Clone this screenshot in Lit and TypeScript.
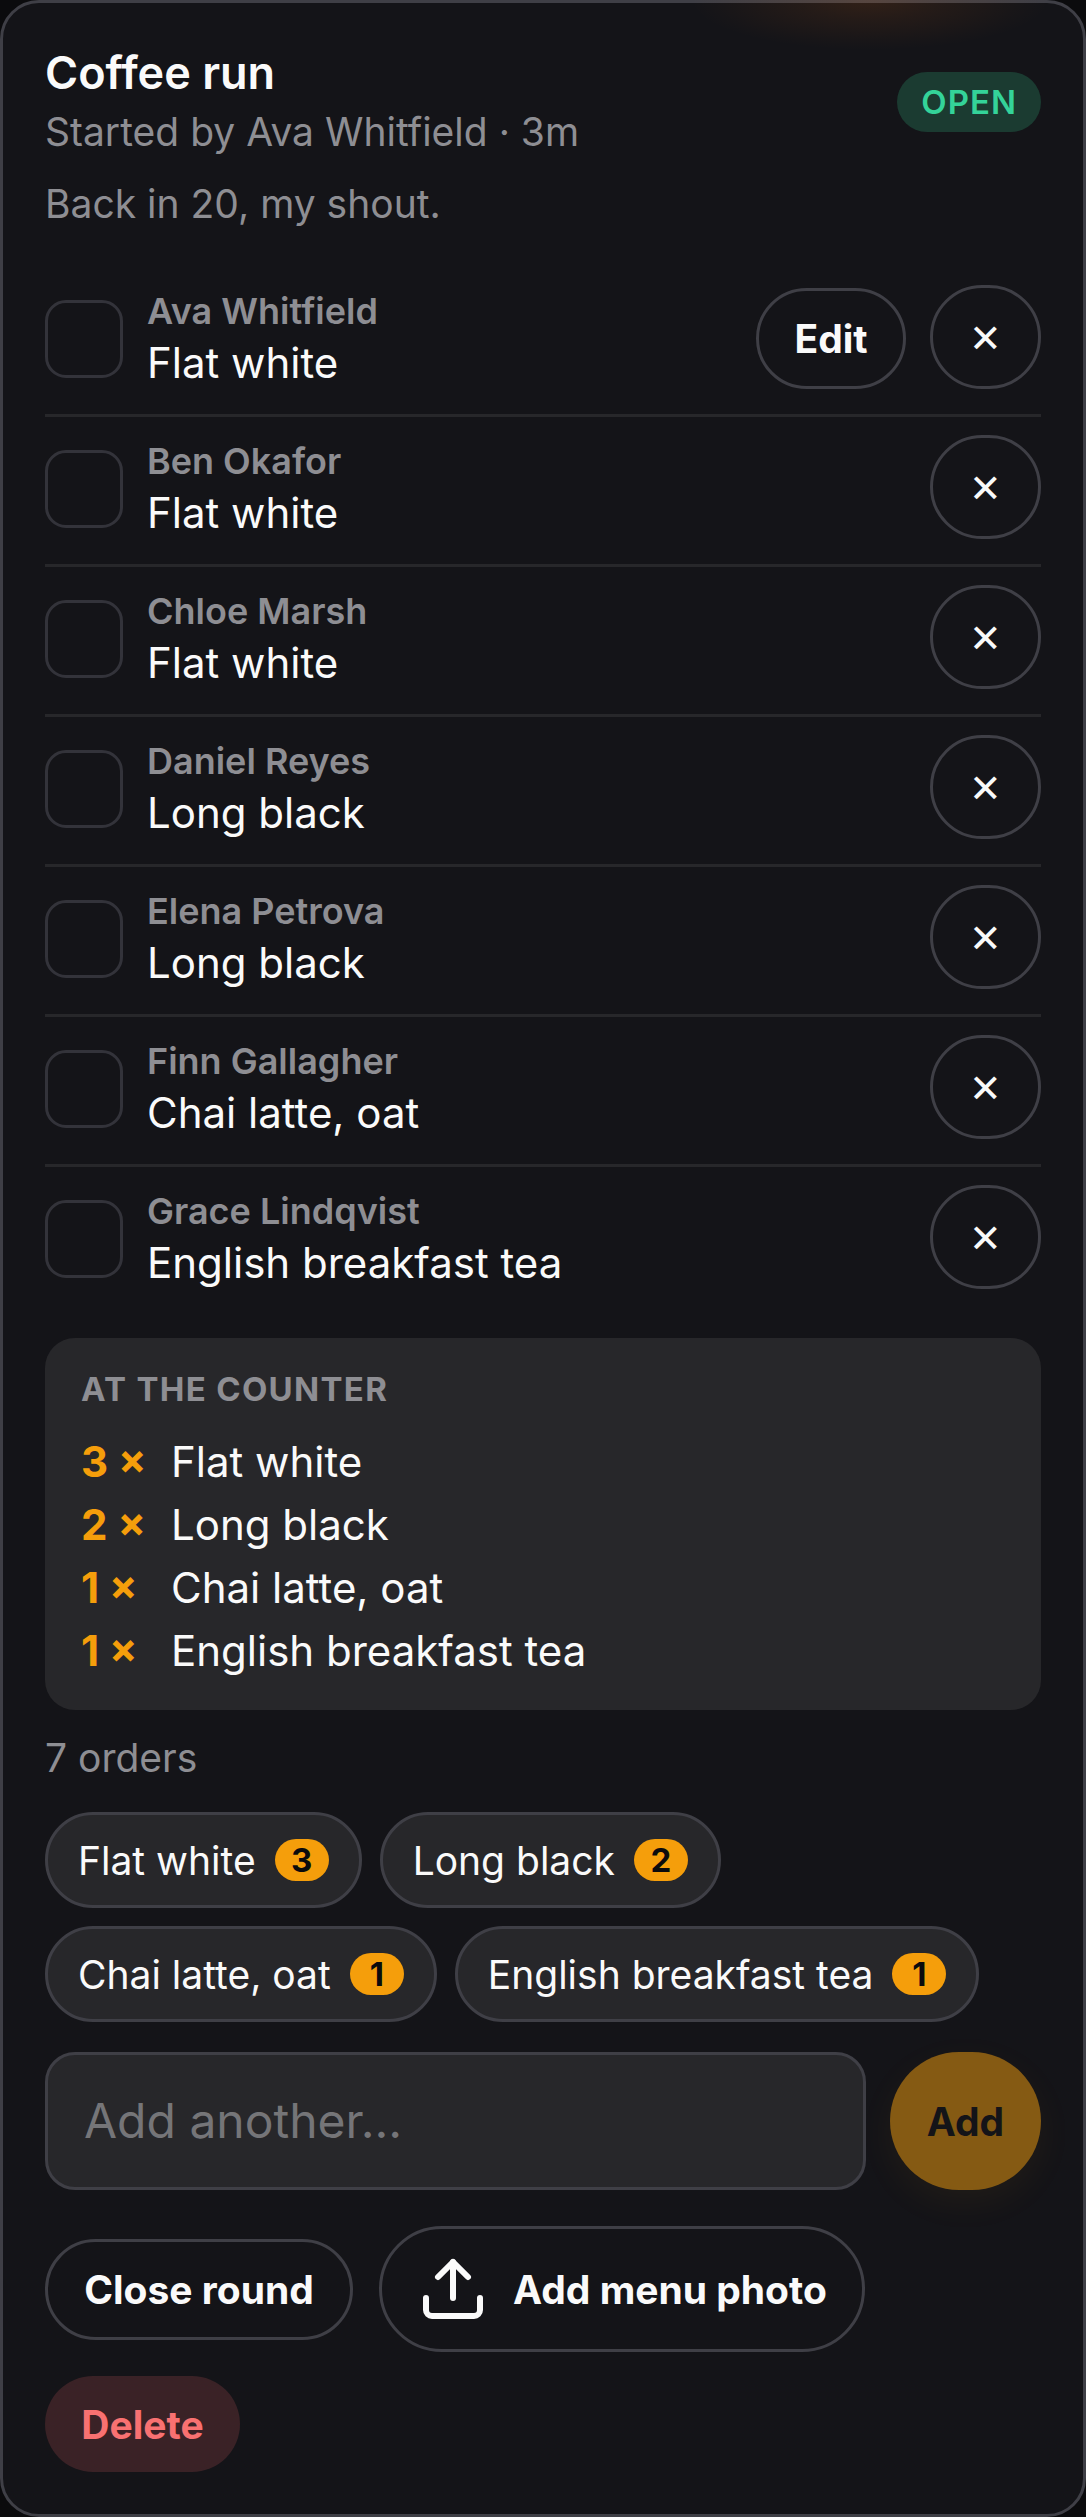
import { LitElement, html, css, svg } from 'lit';
import { customElement } from 'lit/decorators.js';

const orders = [
  { name: 'Ava Whitfield', item: 'Flat white', mine: true },
  { name: 'Ben Okafor', item: 'Flat white' },
  { name: 'Chloe Marsh', item: 'Flat white' },
  { name: 'Daniel Reyes', item: 'Long black' },
  { name: 'Elena Petrova', item: 'Long black' },
  { name: 'Finn Gallagher', item: 'Chai latte, oat' },
  { name: 'Grace Lindqvist', item: 'English breakfast tea' },
];

const tally = [
  { item: 'Flat white', count: 3 },
  { item: 'Long black', count: 2 },
  { item: 'Chai latte, oat', count: 1 },
  { item: 'English breakfast tea', count: 1 },
];

const uploadIcon = svg`<path d="M21 15v4a2 2 0 0 1-2 2H5a2 2 0 0 1-2-2v-4" /><polyline points="17 8 12 3 7 8" /><line x1="12" y1="3" x2="12" y2="15" />`;

@customElement('app-root')
export class AppRoot extends LitElement {
  static styles = css`
    :host {
      display: block;
      background: #0b0b0d;
      font-family: Inter, 'Liberation Sans', sans-serif;
      color: #fafafa;
    }

    .card {
      position: relative;
      box-sizing: border-box;
      padding: 42px;
      background: #141418;
      border: 3px solid #3f3f46;
      border-radius: 39px;
    }

    /* warm light leaking in along the top edge, also tints the border */
    .glow {
      position: absolute;
      top: -53px;
      left: 687px;
      width: 360px;
      height: 100px;
      background: radial-gradient(
        closest-side,
        rgba(249, 115, 22, 0.13),
        rgba(249, 115, 22, 0.07) 40%,
        rgba(249, 115, 22, 0.015) 85%,
        transparent
      );
      pointer-events: none;
    }

    header {
      display: flex;
      justify-content: space-between;
      align-items: flex-start;
    }

    h1 {
      margin: 0;
      font-size: 45px;
      line-height: 56px;
      font-weight: 600;
    }

    .by {
      font-size: 39px;
      line-height: 62px;
      color: #8e8e93;
    }

    .status {
      margin-top: 27px;
      padding: 0 24px;
      height: 60px;
      line-height: 60px;
      border-radius: 999px;
      background: #1b3b31;
      color: #34d399;
      font-size: 33px;
      font-weight: 600;
      letter-spacing: 1px;
    }

    .note {
      margin-top: 11px;
      font-size: 39px;
      line-height: 60px;
      color: #8e8e93;
    }

    .rows {
      margin-top: 33px;
    }

    .row {
      display: flex;
      align-items: center;
      gap: 24px;
      padding: 18px 0 25px;
      border-bottom: 3px solid #27272a;
    }

    .row:last-child {
      border-bottom-color: transparent;
    }

    .check {
      flex: none;
      box-sizing: border-box;
      width: 78px;
      height: 78px;
      margin-top: 3px;
      border: 3px solid #33333a;
      border-radius: 21px;
    }

    .who {
      flex: 1;
    }

    .name {
      font-size: 36px;
      line-height: 52px;
      font-weight: 600;
      color: #8e8e93;
    }

    .item {
      font-size: 42px;
      line-height: 52px;
    }

    button {
      font: inherit;
      color: inherit;
      background: transparent;
      box-sizing: border-box;
      border: 3px solid #3f3f46;
      border-radius: 999px;
      padding: 0;
      font-weight: 700;
      font-size: 39px;
    }

    .edit {
      width: 150px;
      height: 101px;
      margin-top: 3px;
    }

    .x {
      flex: none;
      width: 111px;
      height: 104px;
      font-weight: 400;
    }

    .counter {
      margin-top: 21px;
      padding: 33px 36px 28px;
      background: #27272a;
      border-radius: 30px;
    }

    .counter h2 {
      margin: 0 0 23px;
      font-size: 33px;
      line-height: 36px;
      font-weight: 700;
      letter-spacing: 1.3px;
      color: #8e8e93;
    }

    .line {
      display: flex;
      font-size: 42px;
      line-height: 63px;
    }

    .qty {
      width: 90px;
      color: #f59e0b;
      font-weight: 700;
    }

    .count {
      margin-top: 18px;
      font-size: 39px;
      line-height: 60px;
      color: #8e8e93;
    }

    .chips {
      display: flex;
      flex-wrap: wrap;
      gap: 18px;
      margin-top: 24px;
    }

    .chip {
      display: flex;
      align-items: center;
      gap: 19px;
      box-sizing: border-box;
      height: 96px;
      padding: 0 30px;
      background: #27272a;
      border: 3px solid #3f3f46;
      border-radius: 999px;
      font-size: 39px;
    }

    .badge {
      width: 54px;
      height: 42px;
      line-height: 42px;
      text-align: center;
      border-radius: 999px;
      background: #f59e0b;
      color: #0b0b0d;
      font-size: 33px;
      font-weight: 700;
    }

    .add {
      display: flex;
      gap: 24px;
      margin-top: 30px;
    }

    .field {
      flex: 1;
      box-sizing: border-box;
      height: 138px;
      padding: 0 36px;
      background: #27272a;
      border: 3px solid #3f3f46;
      border-radius: 30px;
      font-size: 48px;
      line-height: 132px;
      color: #757578;
    }

    .add-btn {
      width: 151px;
      height: 138px;
      border: 0;
      background: #855a13;
      color: #141418;
      box-shadow: 0 12px 36px rgba(245, 158, 11, 0.06);
    }

    .actions {
      display: flex;
      align-items: center;
      gap: 26px;
      margin-top: 36px;
    }

    .close {
      width: 308px;
      height: 101px;
    }

    .photo {
      display: flex;
      align-items: center;
      gap: 24px;
      height: 126px;
      padding: 0 35px;
    }

    .photo svg {
      width: 72px;
      height: 72px;
      fill: none;
      stroke: currentColor;
      stroke-width: 2;
      stroke-linecap: round;
      stroke-linejoin: round;
    }

    .delete {
      display: block;
      width: 195px;
      height: 96px;
      margin-top: 24px;
      border: 0;
      background: #3a2226;
      color: #f87171;
    }
  `;

  render() {
    return html`
      <div class="card">
        <div class="glow"></div>
        <header>
          <div>
            <h1>Coffee run</h1>
            <div class="by">Started by Ava Whitfield · 3m</div>
          </div>
          <span class="status">OPEN</span>
        </header>
        <div class="note">Back in 20, my shout.</div>
        <div class="rows">
          ${orders.map(
            (o) => html`
              <div class="row">
                <span class="check"></span>
                <div class="who">
                  <div class="name">${o.name}</div>
                  <div class="item">${o.item}</div>
                </div>
                ${o.mine ? html`<button class="edit">Edit</button>` : ''}
                <button class="x">✕</button>
              </div>
            `
          )}
        </div>
        <section class="counter">
          <h2>AT THE COUNTER</h2>
          ${tally.map(
            (t) => html`<div class="line"><span class="qty">${t.count} ×</span><span>${t.item}</span></div>`
          )}
        </section>
        <div class="count">7 orders</div>
        <div class="chips">
          ${tally.map(
            (t) => html`<span class="chip">${t.item}<span class="badge">${t.count}</span></span>`
          )}
        </div>
        <div class="add">
          <div class="field">Add another...</div>
          <button class="add-btn">Add</button>
        </div>
        <div class="actions">
          <button class="close">Close round</button>
          <button class="photo"><svg viewBox="0 0 24 24">${uploadIcon}</svg>Add menu photo</button>
        </div>
        <button class="delete">Delete</button>
      </div>
    `;
  }
}
